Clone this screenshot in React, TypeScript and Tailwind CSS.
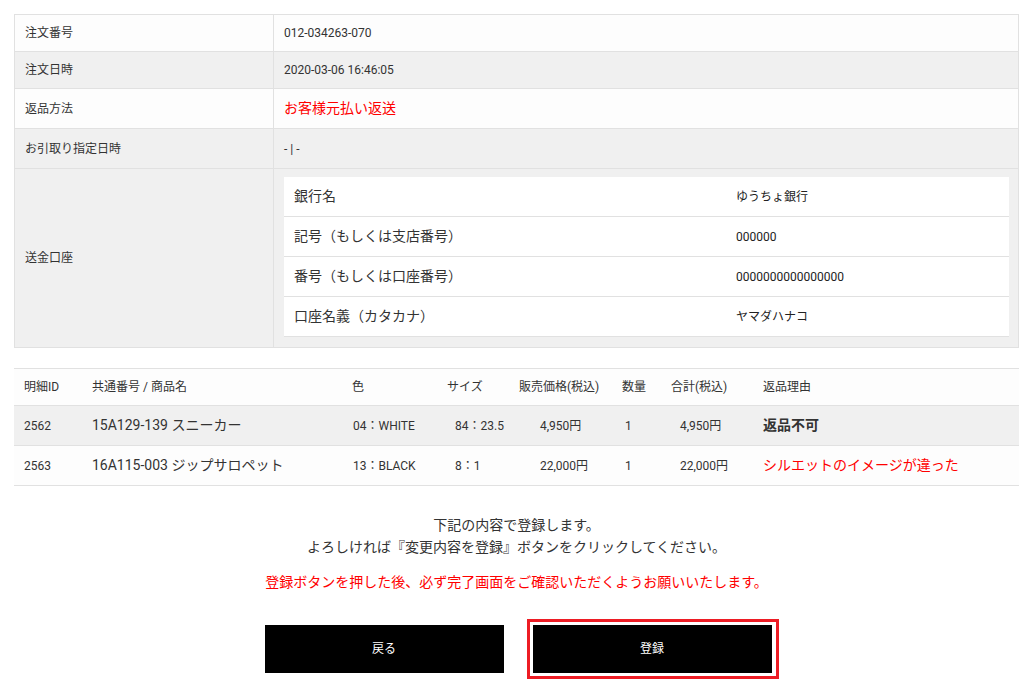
import React from "react"

const font = "font-['Roboto','Noto_Sans_CJK_JP',sans-serif]"

const orderRows = [
  { label: "注文番号", value: "012-034263-070", bg: "bg-[#fdfdfd]", h: "h-[37px]" },
  { label: "注文日時", value: "2020-03-06 16:46:05", bg: "bg-[#f0f0f0]", h: "h-[37px]" },
  { label: "返品方法", value: "お客様元払い返送", bg: "bg-[#fdfdfd]", h: "h-[40px]", red: true },
  { label: "お引取り指定日時", value: "- | -", bg: "bg-[#f0f0f0]", h: "h-[40px]" },
]

const bankRows = [
  { label: "銀行名", value: "ゆうちょ銀行" },
  { label: "記号（もしくは支店番号）", value: "000000" },
  { label: "番号（もしくは口座番号）", value: "0000000000000000" },
  { label: "口座名義（カタカナ）", value: "ヤマダハナコ" },
]

const items = [
  {
    id: "2562",
    name: "15A129-139 スニーカー",
    color: "04：WHITE",
    size: "84：23.5",
    price: "4,950円",
    qty: "1",
    total: "4,950円",
    reason: "返品不可",
    bold: true,
  },
  {
    id: "2563",
    name: "16A115-003 ジップサロペット",
    color: "13：BLACK",
    size: "8：1",
    price: "22,000円",
    qty: "1",
    total: "22,000円",
    reason: "シルエットのイメージが違った",
    bold: false,
  },
]

const cols = "grid grid-cols-[68px_260px_95px_72px_103px_49px_92px_266px]"

export default function App() {
  return (
    <div className={`${font} min-h-screen bg-white text-[#333] pt-[14px] pb-[16px]`}>
      {/* order info */}
      <div className="mx-[14px] border border-[#e1e1e1]">
        {orderRows.map((row) => (
          <div key={row.label} className={`flex ${row.h} ${row.bg} border-b border-[#e1e1e1]`}>
            <div className="w-[259px] shrink-0 border-r border-[#e1e1e1] pl-[10px] flex items-center text-[12px]">
              {row.label}
            </div>
            <div
              className={`flex-1 pl-[10px] flex items-center ${
                row.red ? "text-[14px] text-[#ff0000]" : "text-[12px]"
              }`}
            >
              {row.value}
            </div>
          </div>
        ))}
        <div className="flex bg-[#f0f0f0]">
          <div className="w-[259px] shrink-0 border-r border-[#e1e1e1] pl-[10px] flex items-center text-[12px]">
            送金口座
          </div>
          <div className="flex-1 pl-[10px] pr-[9px] pt-[8px] pb-[10px]">
            <div className="bg-white">
              {bankRows.map((b) => (
                <div key={b.label} className="flex h-[40px] border-b border-[#e1e1e1]">
                  <div className="w-[442px] shrink-0 pl-[10px] flex items-center text-[14px]">{b.label}</div>
                  <div className="flex-1 pl-[10px] flex items-center text-[12px] text-[#222]">{b.value}</div>
                </div>
              ))}
            </div>
          </div>
        </div>
      </div>

      {/* items */}
      <div className="mx-[14px] mt-[20px] border-t border-[#e1e1e1]">
        <div className={`${cols} h-[37px] items-center border-b border-[#e1e1e1] text-[12px] bg-[#fdfdfd]`}>
          <div className="pl-[10px]">明細ID</div>
          <div className="pl-[10px]">共通番号 / 商品名</div>
          <div className="pl-[10px]">色</div>
          <div className="pl-[10px]">サイズ</div>
          <div className="pl-[10px]">販売価格(税込)</div>
          <div className="pl-[10px]">数量</div>
          <div className="pl-[10px]">合計(税込)</div>
          <div className="pl-[10px]">返品理由</div>
        </div>
        {items.map((it, i) => (
          <div
            key={it.id}
            className={`${cols} h-[40px] items-center border-b border-[#e1e1e1] text-[12px] ${
              i % 2 === 0 ? "bg-[#f0f0f0]" : "bg-[#fdfdfd]"
            }`}
          >
            <div className="pl-[10px]">{it.id}</div>
            <div className="pl-[10px] text-[14px]">{it.name}</div>
            <div className="pl-[11px]">{it.color}</div>
            <div className="pl-[18px]">{it.size}</div>
            <div className="pl-[31px]">{it.price}</div>
            <div className="pl-[13px]">{it.qty}</div>
            <div className="pl-[19px]">{it.total}</div>
            <div className={`pl-[10px] text-[14px] ${it.bold ? "font-bold" : "text-[#ff0000]"}`}>{it.reason}</div>
          </div>
        ))}
      </div>

      {/* confirm message */}
      <div className="mt-[28px] text-center text-[14px] leading-[22px]">
        <p>下記の内容で登録します。</p>
        <p>よろしければ『変更内容を登録』ボタンをクリックしてください。</p>
        <p className="mt-[13px] text-[#ff0000]">登録ボタンを押した後、必ず完了画面をご確認いただくようお願いいたします。</p>
      </div>

      {/* buttons */}
      <div className="mt-[26px] flex justify-center items-center gap-[23px] pl-[10px]">
        <button className="w-[239px] h-[48px] bg-black text-white text-[12px]">戻る</button>
        <div className="border-[3px] border-[#ed1c24] p-[3px] pr-[4px]">
          <button className="w-[239px] h-[48px] bg-black text-white text-[12px] block">登録</button>
        </div>
      </div>
    </div>
  )
}
